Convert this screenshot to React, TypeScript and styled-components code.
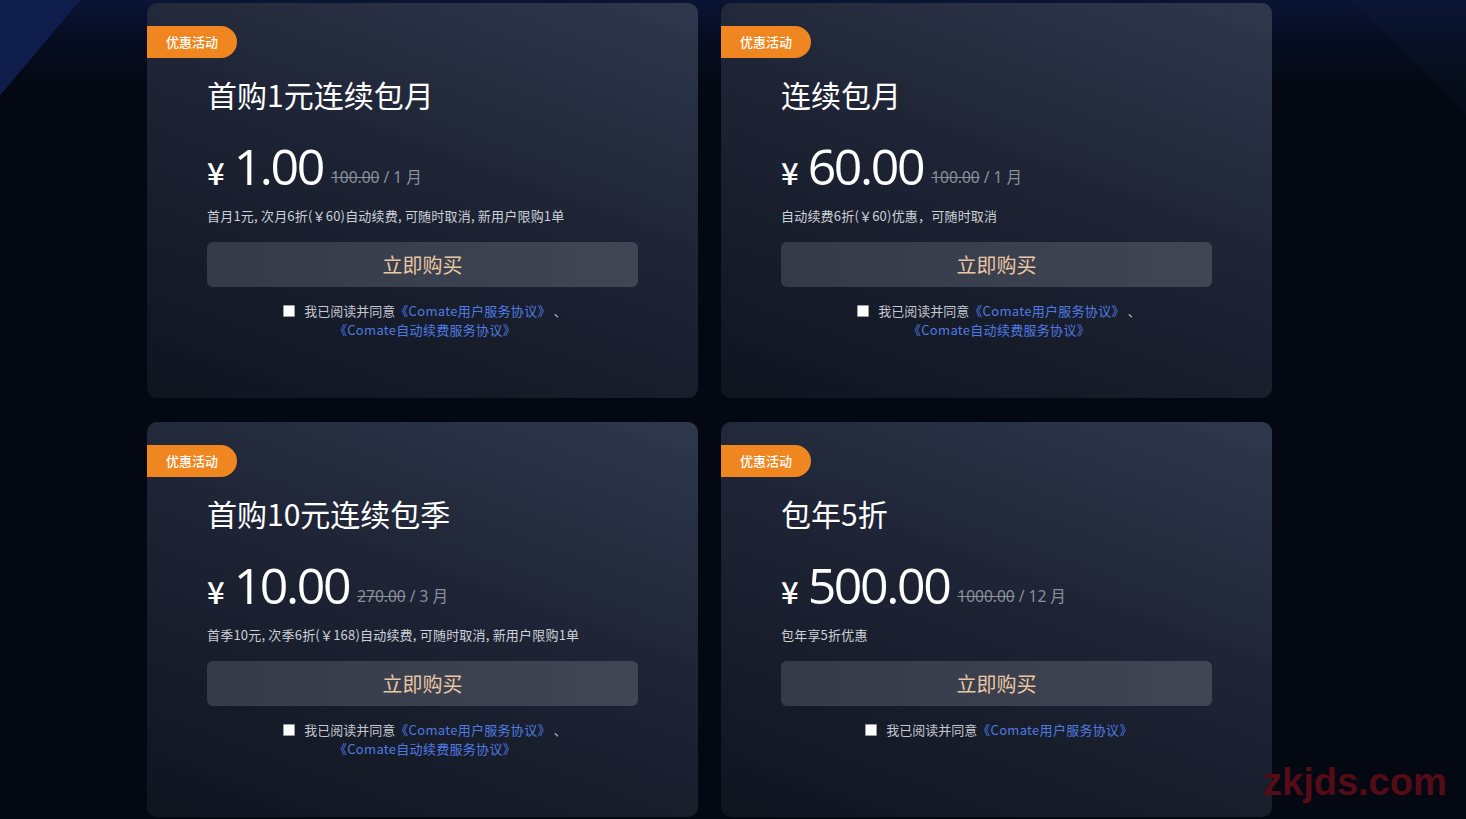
import React from "react";
import styled, { createGlobalStyle } from "styled-components";

const GlobalStyle = createGlobalStyle`
  html, body { margin: 0; padding: 0; }
  body {
    width: 1466px;
    height: 819px;
    overflow: hidden;
    background-color: #030812;
    background-image:
      linear-gradient(to bottom right, #0f1d4c 50%, transparent 50.5%),
      linear-gradient(225deg, rgba(22, 38, 72, 0.14) 0, rgba(22, 38, 72, 0.14) 80px, transparent 81px),
      linear-gradient(180deg, #0a1434 0, #060d22 40px, #030812 90px);
    background-size: 80px 95px, 190px 190px, 100% 100%;
    background-position: 0 0, 100% 0, 0 0;
    background-repeat: no-repeat;
    font-family: "Noto Sans", "Noto Sans CJK SC", sans-serif;
  }
`;

const Page = styled.div`
  position: relative;
  width: 1466px;
  height: 819px;
  box-sizing: border-box;
  padding: 3px 0 0 147px;
`;

const Grid = styled.div`
  display: grid;
  grid-template-columns: 551px 551px;
  column-gap: 23px;
  row-gap: 24px;
`;

const Card = styled.div`
  height: 395px;
  box-sizing: border-box;
  border-radius: 10px;
  background: linear-gradient(200deg, #2f384c 0%, #1e2435 45%, #10141f 100%);
  padding: 23px 60px 0;
  display: flex;
  flex-direction: column;
  align-items: stretch;
`;

const Badge = styled.div`
  align-self: flex-start;
  margin-left: -60px;
  height: 32px;
  width: 90px;
  box-sizing: border-box;
  padding-left: 19px;
  background: #f0861f;
  border-radius: 0 16px 16px 0;
  color: #fff;
  font-size: 13px;
  font-weight: 500;
  line-height: 31px;
  font-family: "Noto Sans CJK SC", sans-serif;
`;

const Title = styled.div`
  margin-top: 16px;
  color: #ffffff;
  font-size: 30px;
  line-height: 40px;
  font-family: "Noto Sans CJK SC", sans-serif;
`;

const PriceRow = styled.div`
  margin-top: 23px;
  display: flex;
  align-items: baseline;
  height: 58px;
  color: #ffffff;
`;

const Yen = styled.span`
  font-size: 31px;
  font-weight: 500;
  margin-right: 9px;
  font-family: "Noto Sans CJK SC", sans-serif;
`;

const Amount = styled.span`
  font-size: 50px;
  line-height: 58px;
  font-family: "Open Sans", "Noto Sans", sans-serif;
  letter-spacing: -2.4px;
`;

const Original = styled.span`
  margin-left: 8px;
  font-size: 15.5px;
  color: #8b909b;
  font-family: "Noto Sans", "Noto Sans CJK SC", sans-serif;
  position: relative;
  top: -2px;
`;

const Strike = styled.span`
  text-decoration: line-through;
`;

const Desc = styled.div`
  margin-top: 11px;
  font-size: 13px;
  line-height: 20px;
  letter-spacing: 0.2px;
  color: #cdd1d8;
  font-family: "Noto Sans CJK SC", sans-serif;
  white-space: nowrap;
`;

const BuyButton = styled.button`
  margin-top: 16px;
  height: 45px;
  width: 100%;
  border: none;
  border-radius: 6px;
  background: linear-gradient(90deg, #353a48 0%, #414654 100%);
  color: #e9c7a3;
  font-size: 20px;
  line-height: 43px;
  font-family: "Noto Sans CJK SC", sans-serif;
  cursor: pointer;
  padding: 0;
`;

const Agreement = styled.div`
  margin-top: 14px;
  padding-left: 5px;
  text-align: center;
  font-size: 13px;
  line-height: 19px;
  color: #c3c7cf;
  font-family: "Noto Sans CJK SC", sans-serif;
`;

const Box = styled.span`
  display: inline-block;
  width: 10px;
  height: 10px;
  background: #ffffff;
  border: 1px solid #9aa0aa;
  border-radius: 1px;
  vertical-align: -1px;
  margin-right: 9px;
`;

const Link = styled.a`
  color: #4f7be2;
  text-decoration: none;
  letter-spacing: 0.3px;
`;

const Watermark = styled.div`
  position: absolute;
  left: 1263px;
  top: 763px;
  font-size: 38px;
  line-height: 1;
  font-weight: 700;
  color: #550c16;
  font-family: "Liberation Sans", Arial, sans-serif;
`;

type Plan = {
  title: string;
  amount: string;
  original: string;
  period: string;
  desc: string;
  autoRenew: boolean;
};

const plans: Plan[] = [
  {
    title: "首购1元连续包月",
    amount: "1.00",
    original: "100.00",
    period: "1 月",
    desc: "首月1元, 次月6折(￥60)自动续费, 可随时取消, 新用户限购1单",
    autoRenew: true,
  },
  {
    title: "连续包月",
    amount: "60.00",
    original: "100.00",
    period: "1 月",
    desc: "自动续费6折(￥60)优惠，可随时取消",
    autoRenew: true,
  },
  {
    title: "首购10元连续包季",
    amount: "10.00",
    original: "270.00",
    period: "3 月",
    desc: "首季10元, 次季6折(￥168)自动续费, 可随时取消, 新用户限购1单",
    autoRenew: true,
  },
  {
    title: "包年5折",
    amount: "500.00",
    original: "1000.00",
    period: "12 月",
    desc: "包年享5折优惠",
    autoRenew: false,
  },
];

function PlanCard({ plan }: { plan: Plan }) {
  return (
    <Card>
      <Badge>优惠活动</Badge>
      <Title>{plan.title}</Title>
      <PriceRow>
        <Yen>¥</Yen>
        <Amount>{plan.amount}</Amount>
        <Original>
          <Strike>{plan.original}</Strike> / {plan.period}
        </Original>
      </PriceRow>
      <Desc>{plan.desc}</Desc>
      <BuyButton>立即购买</BuyButton>
      <Agreement>
        <Box />
        我已阅读并同意<Link>《Comate用户服务协议》</Link>
        {plan.autoRenew && (
          <>
            {" "}、<br />
            <Link>《Comate自动续费服务协议》</Link>
          </>
        )}
      </Agreement>
    </Card>
  );
}

export default function App() {
  return (
    <>
      <GlobalStyle />
      <Page>
        <Grid>
          {plans.map((p) => (
            <PlanCard key={p.title} plan={p} />
          ))}
        </Grid>
        <Watermark>zkjds.com</Watermark>
      </Page>
    </>
  );
}
